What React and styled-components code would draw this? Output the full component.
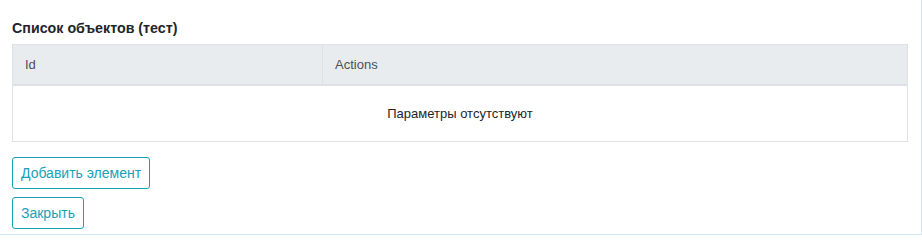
import React from "react";
import styled, { createGlobalStyle } from "styled-components";

const GlobalStyle = createGlobalStyle`
  html, body {
    margin: 0;
    padding: 0;
    background: #ffffff;
  }
  body {
    font-family: "Liberation Sans", Arial, sans-serif;
    color: #212529;
  }
`;

const Panel = styled.div`
  box-sizing: border-box;
  width: 922px;
  height: 235px;
  padding: 18px 13px 0 12px;
  border-right: 1px solid #d2e4ec;
  border-bottom: 1px solid #d2e4ec;
  display: flex;
  flex-direction: column;
`;

const Title = styled.h5`
  margin: 0 0 6px;
  font-size: 14.25px;
  line-height: 20px;
  font-weight: 700;
  color: #212529;
`;

const Table = styled.div`
  border: 1px solid #dee2e6;
  font-size: 13px;
`;

const HeadRow = styled.div`
  display: grid;
  grid-template-columns: 309px 1fr;
  height: 39px;
  background: #e9ecef;
  border-bottom: 2px solid #dee2e6;
`;

const HeadCell = styled.div`
  display: flex;
  align-items: center;
  padding: 0 12px;
  color: #495057;
  border-left: ${({ divided }) => (divided ? "1px solid #dee2e6" : "none")};
`;

const EmptyRow = styled.div`
  height: 55px;
  display: flex;
  align-items: center;
  justify-content: center;
  color: #212529;
`;

const Actions = styled.div`
  display: flex;
  flex-direction: column;
  align-items: flex-start;
  gap: 8px;
  margin-top: 15px;
`;

const OutlineButton = styled.button`
  font-family: "Liberation Sans", Arial, sans-serif;
  font-size: 14px;
  line-height: 18px;
  padding: 6px 8px;
  color: #17a2b8;
  background: transparent;
  border: 1px solid #17a2b8;
  border-radius: 3px;
  cursor: pointer;
`;

export default function App() {
  return (
    <>
      <GlobalStyle />
      <Panel>
        <Title>Список объектов (тест)</Title>
        <Table>
          <HeadRow>
            <HeadCell>Id</HeadCell>
            <HeadCell divided>Actions</HeadCell>
          </HeadRow>
          <EmptyRow>Параметры отсутствуют</EmptyRow>
        </Table>
        <Actions>
          <OutlineButton>Добавить элемент</OutlineButton>
          <OutlineButton>Закрыть</OutlineButton>
        </Actions>
      </Panel>
    </>
  );
}
